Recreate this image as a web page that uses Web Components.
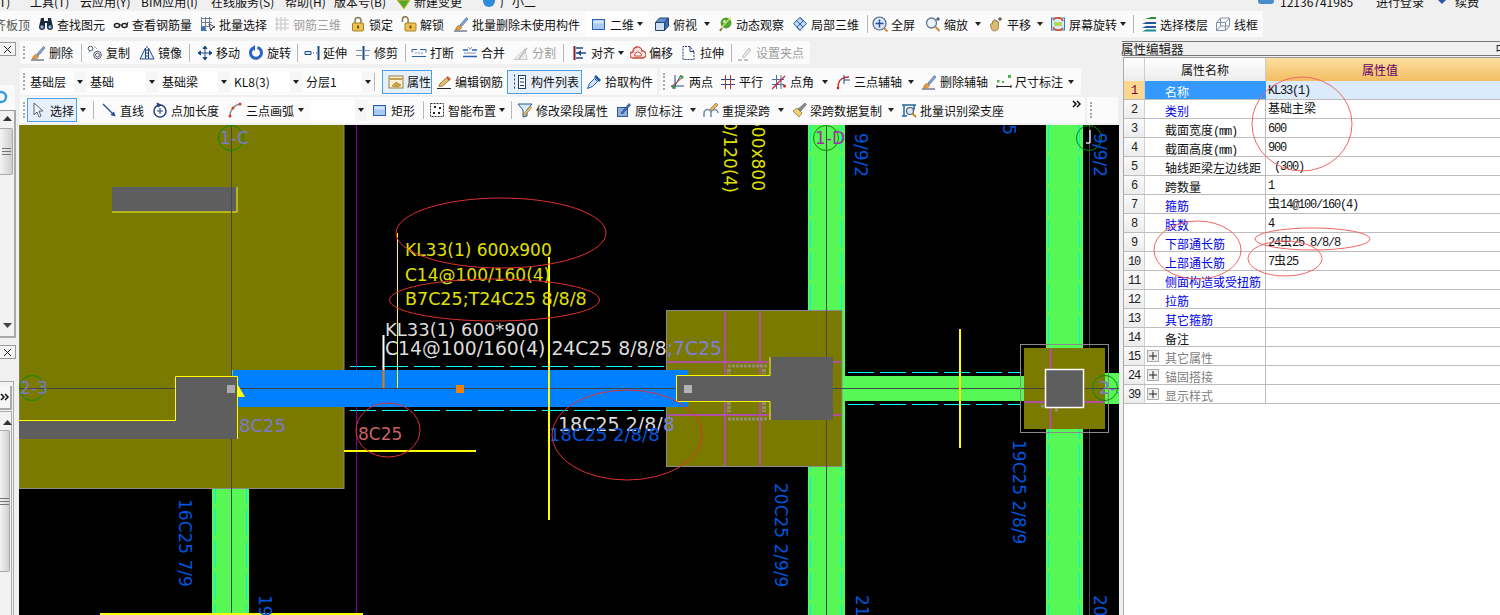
<!DOCTYPE html>
<html lang="zh">
<head>
<meta charset="utf-8">
<title>属性编辑器</title>
<style>
  html, body { margin: 0; height: 100%; overflow: hidden; background: #f0f0f0; }
  body { font: 12px "Noto Sans CJK SC", "Liberation Sans", sans-serif; color: #111; }
  i.zh { font: 12px/12px "Noto Sans CJK SC", sans-serif; letter-spacing: 0; }
  i.mono { font: 12px/12px "Liberation Mono", monospace; letter-spacing: -1.2px; }
</style>
</head>
<body>
<cad-app>
  <menu-strip slot="menu"></menu-strip>

  <tool-bar slot="top" fill>
    <tool-btn w="44" pull="-6" dim>齐板顶</tool-btn>
    <tool-btn w="75" icon="binoc">查找图元</tool-btn>
    <tool-btn w="87" icon="glasses">查看钢筋量</tool-btn>
    <tool-btn w="74" icon="batch">批量选择</tool-btn>
    <tool-btn w="76" icon="grid" off>钢筋三维</tool-btn>
    <tool-btn w="51" icon="lock">锁定</tool-btn>
    <tool-btn w="52" icon="unlock">解锁</tool-btn>
    <tool-btn w="133" icon="brush">批量删除未使用构件</tool-btn>
    <tool-btn w="63" icon="rect" arrow white pad="5">二维</tool-btn>
    <tool-gap w="5"></tool-gap>
    <tool-btn w="63" icon="cube" arrow>俯视</tool-btn>
    <tool-btn w="75" icon="orbit">动态观察</tool-btn>
    <tool-btn w="75" icon="local">局部三维</tool-btn>
    <tool-sep w="5"></tool-sep>
    <tool-btn w="53" icon="full">全屏</tool-btn>
    <tool-btn w="63" icon="zoom" arrow>缩放</tool-btn>
    <tool-btn w="62" icon="pan" arrow>平移</tool-btn>
    <tool-btn w="83" icon="screen" arrow>屏幕旋转</tool-btn>
    <tool-sep w="8"></tool-sep>
    <tool-btn w="74" icon="floors">选择楼层</tool-btn>
    <tool-btn w="48" icon="wire">线框</tool-btn>
  </tool-bar>

  <side-dock slot="left"></side-dock>

  <tool-bar slot="center" h="23" grip>
    <tool-btn w="51" icon="brush">删除</tool-btn>
    <tool-sep w="6"></tool-sep>
    <tool-btn w="52" icon="copy">复制</tool-btn>
    <tool-btn w="50" icon="mirror">镜像</tool-btn>
    <tool-sep w="8"></tool-sep>
    <tool-btn w="51" icon="move">移动</tool-btn>
    <tool-btn w="49" icon="spin">旋转</tool-btn>
    <tool-sep w="7"></tool-sep>
    <tool-btn w="51" icon="extend">延伸</tool-btn>
    <tool-btn w="50" icon="trim">修剪</tool-btn>
    <tool-sep w="6"></tool-sep>
    <tool-btn w="51" icon="cut">打断</tool-btn>
    <tool-btn w="51" icon="join">合并</tool-btn>
    <tool-btn w="50" icon="split" off>分割</tool-btn>
    <tool-sep w="9"></tool-sep>
    <tool-btn w="58" icon="align" arrow>对齐</tool-btn>
    <tool-btn w="51" icon="offset">偏移</tool-btn>
    <tool-btn w="50" icon="stretch">拉伸</tool-btn>
    <tool-sep w="6"></tool-sep>
    <tool-btn w="73" icon="clip" off>设置夹点</tool-btn>
  </tool-bar>

  <tool-row slot="center" style="margin-top:4px">
    <tool-bar h="27" grip>
      <tool-combo w="58" style="margin-left:-2px">基础层</tool-combo>
      <tool-gap w="2"></tool-gap>
      <tool-combo w="70">基础</tool-combo>
      <tool-gap w="2"></tool-gap>
      <tool-combo w="70">基础梁</tool-combo>
      <tool-gap w="2"></tool-gap>
      <tool-combo w="70">KL8(3)</tool-combo>
      <tool-gap w="2"></tool-gap>
      <tool-combo w="70">分层1</tool-combo>
      <tool-sep w="8"></tool-sep>
      <tool-btn w="50" icon="attr" on pad="5">属性</tool-btn>
      <tool-gap w="4"></tool-gap>
      <tool-btn w="71" icon="edit">编辑钢筋</tool-btn>
      <tool-btn w="75" icon="list" on pad="4">构件列表</tool-btn>
      <tool-gap w="4"></tool-gap>
      <tool-btn w="71" icon="pick">拾取构件</tool-btn>
    </tool-bar>
    <tool-bar h="27" grip style="margin-left:-1px">
      <tool-btn w="50" icon="two">两点</tool-btn>
      <tool-btn w="51" icon="para">平行</tool-btn>
      <tool-btn w="64" icon="angle" arrow>点角</tool-btn>
      <tool-btn w="86" icon="arcaxis" arrow>三点辅轴</tool-btn>
      <tool-btn w="75" icon="brush">删除辅轴</tool-btn>
      <tool-btn w="85" icon="dim" arrow>尺寸标注</tool-btn>
    </tool-bar>
  </tool-row>

  <tool-row slot="center" style="margin-top:2px">
    <tool-bar h="26" grip w="1065">
      <tool-btn w="50" icon="cursor" on pad="3" style="margin-left:-3px">选择</tool-btn>
      <tool-btn w="16" arrow></tool-btn>
      <tool-sep w="8"></tool-sep>
      <tool-btn w="51" icon="line">直线</tool-btn>
      <tool-btn w="75" icon="ptlen">点加长度</tool-btn>
      <tool-btn w="84" icon="arc" arrow>三点画弧</tool-btn>
      <tool-combo w="56"></tool-combo>
      <tool-gap w="5"></tool-gap>
      <tool-btn w="51" icon="rect">矩形</tool-btn>
      <tool-sep w="6"></tool-sep>
      <tool-btn w="82" icon="smart" arrow>智能布置</tool-btn>
      <tool-sep w="6"></tool-sep>
      <tool-btn w="99" icon="funnel">修改梁段属性</tool-btn>
      <tool-btn w="87" icon="inplace" arrow>原位标注</tool-btn>
      <tool-btn w="88" icon="respan" arrow>重提梁跨</tool-btn>
      <tool-btn w="110" icon="sweep" arrow>梁跨数据复制</tool-btn>
      <tool-btn w="110" icon="scan">批量识别梁支座</tool-btn>
      <tool-more></tool-more>
    </tool-bar>
    <tool-bar h="26" grip w="31" style="margin-left:-2px"></tool-bar>
  </tool-row>

  <cad-canvas slot="center"></cad-canvas>

  <prop-panel slot="right">
    <prop-row n="1" selected>名称<span slot="value">KL33(1)</span></prop-row>
    <prop-row n="2" link>类别<span slot="value"><i class="zh">基础主梁</i></span></prop-row>
    <prop-row n="3">截面宽度<i class="mono">(mm)</i><span slot="value">600</span></prop-row>
    <prop-row n="4">截面高度<i class="mono">(mm)</i><span slot="value">900</span></prop-row>
    <prop-row n="5">轴线距梁左边线距<span slot="value">&nbsp;(300)</span></prop-row>
    <prop-row n="6">跨数量<span slot="value">1</span></prop-row>
    <prop-row n="7" link>箍筋<span slot="value"><i class="zh">虫</i>14@100/160(4)</span></prop-row>
    <prop-row n="8" link>肢数<span slot="value">4</span></prop-row>
    <prop-row n="9" link>下部通长筋<span slot="value">24<i class="zh">虫</i>25 8/8/8</span></prop-row>
    <prop-row n="10" link>上部通长筋<span slot="value">7<i class="zh">虫</i>25</span></prop-row>
    <prop-row n="11" link>侧面构造或受扭筋</prop-row>
    <prop-row n="12" link>拉筋</prop-row>
    <prop-row n="13" link>其它箍筋</prop-row>
    <prop-row n="14">备注</prop-row>
    <prop-row n="15" group>其它属性</prop-row>
    <prop-row n="24" group>锚固搭接</prop-row>
    <prop-row n="39" group>显示样式</prop-row>
  </prop-panel>
</cad-app>

<script>
const ICONS = {
  binoc: `<path d="M3 2h3v3h4V2h3l2 9a3 3 0 0 1-6 0V7H7v4a3 3 0 0 1-6 0z" fill="#1d2a3a"/><circle cx="4" cy="11" r="1.7" fill="#8fb4dc"/><circle cx="12" cy="11" r="1.7" fill="#8fb4dc"/>`,
  glasses: `<ellipse cx="4" cy="9.5" rx="2.6" ry="2" fill="none" stroke="#222" stroke-width="1.5"/><ellipse cx="11.5" cy="9.5" rx="2.6" ry="2" fill="none" stroke="#222" stroke-width="1.5"/><path d="M6.5 9l2.500 0M14 9l1-3" stroke="#222"/>`,
  batch: `<path d="M1.500 1v13M5.500 1v13M9.500 1v8M1 2.500h11M1 6.500h11M1 10.500h8M1 14.500h6" stroke="#6c7f99" fill="none"/><rect x="1" y="11" width="4" height="4" fill="#3b6fd0"/><path d="M9 8l6 3-3 1-1 3z" fill="#fff" stroke="#345"/>`,
  grid: `<path d="M1 4h14M1 8h14M1 12h14M3 1v14M7 1v14M11 1v14" stroke="#c4c4c4" fill="none"/>`,
  lock: `<path d="M5 7V4.500a3 3 0 0 1 6 0V7" fill="none" stroke="#8a7a50" stroke-width="1.500"/><rect x="2.500" y="7" width="11" height="8" rx="1" fill="#efc14e" stroke="#a5802a"/><rect x="7" y="9.500" width="2" height="3" fill="#6b5216"/>`,
  unlock: `<path d="M1.500 6V3.500a2.800 2.800 0 0 1 5.600 0V7" fill="none" stroke="#8a7a50" stroke-width="1.500"/><rect x="4" y="7" width="11" height="8" rx="1" fill="#efc14e" stroke="#a5802a"/><rect x="8.500" y="9.500" width="2" height="3" fill="#6b5216"/>`,
  brush: `<path d="M1 15h13" stroke="#2f3f58"/><path d="M2.500 14c.5-3 2-4.500 4-4.500l2 2c0 1.500-3 3-6 2.500z" fill="#e79a3c" stroke="#9c6322" stroke-width=".6"/><path d="M7 9l6.500-7.500 1.500 1.500-6.500 7.500z" fill="#86a8e0" stroke="#46618f" stroke-width=".7"/>`,
  rect: `<rect x="1.500" y="3.500" width="12" height="10" fill="#a9c8f2" stroke="#2c5fb8"/><rect x="2.500" y="4.500" width="10" height="3" fill="#d4e4f8"/>`,
  cube: `<path d="M1.500 6.500h9v8h-9z" fill="#cfe0f4" stroke="#1f4472"/><path d="M1.500 6.500l4-4.500h9l-4 4.500z" fill="#5f93cc" stroke="#1f4472"/><path d="M10.500 6.500l4-4.500v8l-4 4.500z" fill="#3c70ac" stroke="#1f4472"/>`,
  orbit: `<path d="M3 15l2-3" stroke="#8a7a30" stroke-width="2"/><circle cx="9" cy="7" r="5" fill="#4eab2c" stroke="#2a701a" stroke-width=".6"/><circle cx="7.500" cy="5.500" r="1.500" fill="#c8eeb0"/><path d="M14 1.500C11 4 7 9 4 12" stroke="#e8d880" stroke-width="1.300" fill="none"/>`,
  local: `<path d="M8 1.500l6.500 6-6.500 7-6.500-7z" fill="#bcd6f4" stroke="#2a5f9e"/><path d="M4.500 4.500l6.500 6.500M8 1.500l3 3M11.500 4.500L5 11M8 14.500l-3-3" stroke="#2a5f9e" fill="none"/>`,
  full: `<circle cx="7.500" cy="7.500" r="6.500" fill="#dbe6f5" stroke="#4f6787" stroke-width="1.200"/><path d="M7.500 3.500v8M3.500 7.500h8" stroke="#234e9e" stroke-width="1.400"/><path d="M12.500 12.500l3 3" stroke="#d0902c" stroke-width="2"/>`,
  zoom: `<circle cx="6.500" cy="7" r="5" fill="#eef3fa" stroke="#64748c" stroke-width="1.300"/><path d="M10.500 11l4 4" stroke="#c98e2a" stroke-width="2"/><path d="M13 1v4M11 3h4" stroke="#1f3e70"/>`,
  pan: `<path d="M2.500 9c0-2 1.500-1.500 2-1V5.500c0-1 1.500-1 1.500 0V4.500c0-1 1.500-1 1.500 0v.5c0-1 1.500-1 1.500 0v1c0-1 1.500-1 1.500 0v5c0 2-1.500 4-4 4-3 0-3.500-3-4-6z" fill="#dcbc72" stroke="#80672e" stroke-width=".7"/><path d="M12 1v4M10 3h4" stroke="#333"/>`,
  screen: `<rect x="1.500" y="2" width="13" height="12" fill="#d4ecf8" stroke="#2a83b8"/><rect x="4" y="6" width="8" height="4" fill="#b9d65c"/><path d="M13 5a6 6 0 0 0-10-1M3 11a6 6 0 0 0 10 1" fill="none" stroke="#e04428" stroke-width="1.500"/>`,
  floors: `<path d="M1 4l9-3h5v2H5z" fill="#2c8c3c"/><path d="M1 8l4-2h10v2z" fill="#26569e"/><path d="M1 12l4-2h10v2z" fill="#26569e"/><path d="M1 15.500l4-2h10v2z" fill="#1c8a8c"/>`,
  wire: `<path d="M1.500 6.500h9v8h-9zM1.500 6.500l4-4.500h9l-4 4.500M10.500 14.500l4-4.500V2M5.500 2v8h9M5.500 10l-4 4.500" fill="none" stroke="#7f93ae"/>`,
  copy: `<circle cx="3.500" cy="3.500" r="2.300" fill="#fff" stroke="#4e5c6e"/><path d="M1 7.500l5-2.500M7 1l3 3" stroke="#9aa8ba"/><circle cx="10.500" cy="10" r="3.800" fill="none" stroke="#4e5c6e"/><circle cx="10.500" cy="10" r="2" fill="none" stroke="#4e5c6e"/>`,
  mirror: `<path d="M8 1v14" stroke="#1f3e70" stroke-dasharray="2 1"/><path d="M6.500 3v11H1zM9.500 3v11H15z" fill="#e4edf8" stroke="#1f4c88"/>`,
  move: `<path d="M8 1v14M1 8h14M8 1L6 3.500h4zM8 15l-2-2.500h4zM1 8l2.500-2v4zM15 8l-2.500-2v4z" stroke="#1f4c88" fill="#1f4c88"/>`,
  spin: `<path d="M9.500 2.500a5.500 5.500 0 1 1-5 1" fill="none" stroke="#2a62c8" stroke-width="3"/><path d="M7 0v6L3 3z" fill="#2a62c8"/>`,
  extend: `<path d="M1 6.500h6v3H1zM9 8h1M12 8h1" fill="#dce6f4" stroke="#1f4c88"/><path d="M14.500 1v14" stroke="#1f4c88" stroke-width="2"/>`,
  trim: `<path d="M1 5.500h6M1 10.500h6M10 5.500h5M10 10.500h4" stroke="#7f93ae"/><path d="M8.500 1v14" stroke="#1f4c88" stroke-width="2"/>`,
  cut: `<path d="M1 4.500h5M9 4.500h6M1 11.500h14M1 4.500v3M15 4.500v3" stroke="#2a62b8" fill="none"/><path d="M4 8h8" stroke="#7f93ae" stroke-dasharray="2 1"/>`,
  join: `<path d="M1 11.500h14M1 5h5M10 5h5" stroke="#2a62b8" stroke-width="1.400" fill="none"/><path d="M6 2l2 2.500L10 2M2 8h12" stroke="#7f93ae" fill="none"/>`,
  split: `<path d="M1 14.500h13L12 4z" fill="#eee" stroke="#c6c6c6"/><path d="M6 14l8-11" stroke="#bbb" stroke-width="1.500"/>`,
  align: `<path d="M2.500 1v14" stroke="#8a1c28" stroke-width="2"/><path d="M4 3h7M4 8h10M4 13h7" stroke="#1f4c88" stroke-width="1.500"/><path d="M9 5L5 8l4 3z" fill="#1f4c88"/>`,
  offset: `<path d="M3 13a3 3 0 0 1 0-6 4.500 4.500 0 0 1 9-1 3.500 3.500 0 0 1 1 7z" fill="#f8e0dc" stroke="#c84438" stroke-width="1.300"/><path d="M5 11a1.500 1.500 0 0 1 0-2 3 3 0 0 1 5-1 2 2 0 0 1 1 3z" fill="#fff" stroke="#c84438"/>`,
  stretch: `<path d="M2 14.500V1.500h7l4 5v8z" fill="#fff" stroke="#1f3e70" stroke-dasharray="2 1"/><path d="M9 1.500v5h4" stroke="#1f3e70" fill="none"/>`,
  clip: `<path d="M1 15h4M7 15h4" stroke="#c0c0c0" stroke-width="2"/><path d="M5 12l7-9 2 2-7 8z" fill="#e8e8e8" stroke="#c0c0c0"/>`,
  attr: `<rect x="1" y="2" width="14" height="12" fill="#faf1d8" stroke="#9c8040"/><path d="M1 5h14" stroke="#c8a050" stroke-width="2"/><path d="M4 12l4-4 5 3-3 2z" fill="#d8a238" stroke="#85601c" stroke-width=".5"/>`,
  edit: `<path d="M1 14.500h14" stroke="#222"/><path d="M3 12.500l1-3 8-7 2.500 2.500-8 7z" fill="#e6c070" stroke="#85601c" stroke-width=".8"/><path d="M11 3.500l2.500 2.500" stroke="#d04030" stroke-width="1.500"/>`,
  list: `<path d="M2 1.500h2M2 5.500h2M2 9.500h2M2 13.500h2" stroke="#1f3e70" stroke-width="2" stroke-dasharray="1 1"/><rect x="6.500" y="1.500" width="7" height="13" fill="#fff" stroke="#1f3e70"/><path d="M8 4.500h4M8 8h4M8 11.500h4" stroke="#1f3e70"/>`,
  pick: `<path d="M1.500 14.500l2-5 5-5 3 3-5 5z" fill="#cfe6fa" stroke="#1f5ca8"/><path d="M8 3l2-2 5 5-2 2z" fill="#1f5ca8"/>`,
  two: `<path d="M1 12h13M11 1L3 15M5 1v14" stroke="#1f4c88" fill="none"/><path d="M1 13l12-10" stroke="#c02828"/><circle cx="3.500" cy="13" r="1.600" fill="#3c9a3c"/><circle cx="12" cy="3" r="1.600" fill="#3c9a3c"/>`,
  para: `<path d="M1 5.500h14M1 10.500h14" stroke="#1f4c88"/><path d="M5.500 1v14M10.500 1v14" stroke="#c02828"/>`,
  angle: `<path d="M1 5.500h12M1 10.500h12M5.500 1v14M10 1v14" stroke="#1f4c88" opacity=".8"/><path d="M1 15L14 2" stroke="#d02020" stroke-width="1.300"/><circle cx="13.500" cy="12" r="1.500" fill="#d02020"/>`,
  arcaxis: `<path d="M3 14C3 7 6 3 14 3" fill="none" stroke="#d02020" stroke-width="1.300"/><path d="M9 1v9M9 6h6" stroke="#1f4c88"/><circle cx="3" cy="14" r="1.300" fill="#d02020"/>`,
  dim: `<path d="M1 14v-3M15 14v-3M1 12.500h14" stroke="#222"/><rect x="1" y="6" width="2.500" height="2.500" fill="#4cb84c"/><rect x="12" y="1" width="3" height="3" fill="#4cb84c"/><rect x="6" y="7" width="2" height="2" fill="#4cb84c"/>`,
  cursor: `<path d="M3 1v12l3-3 2 5 2-1-2-5h4z" fill="#f4f6fa" stroke="#55657c"/>`,
  line: `<path d="M2 2l11 11" stroke="#1f4c88" stroke-width="1.300"/><path d="M14.500 14.500l-5-1.500 3.500-3.500z" fill="#1f4c88"/>`,
  ptlen: `<circle cx="8" cy="9" r="6" fill="none" stroke="#26417a" stroke-width="1.500"/><path d="M5 1l4 2-3 2zM8 6v6M5 9h6" fill="#26417a" stroke="#26417a"/>`,
  arc: `<path d="M3 14C3 8 7 3 13 2" fill="none" stroke="#7a8ea8" stroke-width="1.500"/><circle cx="3" cy="14" r="1.500" fill="#d84020"/><circle cx="6" cy="6" r="1.500" fill="#d84020"/><circle cx="13" cy="2" r="1.500" fill="#d84020"/>`,
  smart: `<rect x="1.500" y="1.500" width="13" height="13" fill="#fff" stroke="#333" stroke-dasharray="2 1"/><path d="M5 4h2v2H5zM10 5h2v2h-2zM4 10h2v2H4zM9 10h2v2H9z" fill="#222"/>`,
  funnel: `<path d="M1 2h14l-5 6v6l-4 1V8z" fill="#dcebf8" stroke="#1f5c90"/><path d="M6 13l7-9 1.500 1.500-7 9z" fill="#e6c070" stroke="#85601c" stroke-width=".6"/>`,
  inplace: `<rect x="1.500" y="5.500" width="10" height="9" fill="#8eb0dc" stroke="#34588c"/><path d="M5 11l8-9.500 1.500 1.500-8 9z" fill="#3c6cb8" stroke="#1f3e70" stroke-width=".6"/>`,
  respan: `<path d="M1 15v-4a3.500 3.500 0 0 1 7 0v4M8 15v-4a3.500 3.500 0 0 1 7 0" fill="none" stroke="#7290b8" stroke-width="1.600"/><path d="M7 7l6-6 2 2-6 6z" fill="#e6b070" stroke="#85601c" stroke-width=".6"/>`,
  sweep: `<path d="M2 9l6 6 3-4-5-5z" fill="#f0d070" stroke="#8a6a24" stroke-width=".7"/><path d="M7 7l7-6 1.500 1.500-6 7z" fill="#8a8a8a" stroke="#555" stroke-width=".5"/>`,
  scan: `<path d="M1 3h14M3 3v11M13 3v5M1 14h5" stroke="#1f6a9c" stroke-width="1.500" fill="none"/><circle cx="9" cy="9" r="3.500" fill="#d8e6f0" stroke="#4a5a6a" stroke-width="1.200"/><path d="M11.500 11.500l3.500 3.500" stroke="#c08a28" stroke-width="2"/>`,
};

class CadApp extends HTMLElement {
  constructor() {
    super();
    this.attachShadow({ mode: "open" });
    this.shadowRoot.innerHTML = `
      <style>
        :host { display: grid; width: 1500px; height: 615px; overflow: hidden;
          grid-template-columns: 19px 1100px 381px; grid-template-rows: 11px 26px 1fr; }
        .menu { grid-column: 1 / -1; }
        .top { grid-column: 1 / -1; }
        .left { padding-top: 4px; min-height: 0; }
        .center { padding-top: 4px; display: flex; flex-direction: column; min-height: 0; }
        .right { padding-top: 4px; min-height: 0; }
      </style>
      <div class="menu"><slot name="menu"></slot></div>
      <div class="top"><slot name="top"></slot></div>
      <div class="left"><slot name="left"></slot></div>
      <div class="center"><slot name="center"></slot></div>
      <div class="right"><slot name="right"></slot></div>`;
  }
}

class MenuStrip extends HTMLElement {
  constructor() {
    super();
    this.attachShadow({ mode: "open" });
    const items = [[59, "视图(T)"], [50, "工具(T)"], [61, "云应用(Y)"], [70, "BIM应用(I)"],
      [74, "在线服务(S)"], [49, "帮助(H)"], [80, "版本号(B)"], [86, "新建变更"],
      [780, "广小二"], [96, "12136741985"], [79, "进行登录"], [45, "续费"]];
    this.shadowRoot.innerHTML = `
      <style>
        :host { display: flex; height: 10px; overflow: hidden; align-items: flex-end;
          font: 12px/16px "Noto Sans CJK SC", sans-serif; color: #111; margin-left: -29px; }
        span { flex: none; white-space: nowrap; }
        svg { position: absolute; top: 0; }
      </style>
      ${items.map(([w, t]) => `<span style="width:${w}px">${t}</span>`).join("")}
      <svg style="left:396px" width="16" height="10"><path d="M1 0h13L8 9z" fill="#4caa2c" stroke="#e8b030"/></svg>
      <svg style="left:482px" width="14" height="8"><ellipse cx="7" cy="1" rx="6" ry="6" fill="#2f8ad8"/></svg>
      <svg style="left:1258px" width="16" height="4"><rect x="0" y="-8" width="16" height="12" rx="3" fill="#4a8cc8"/></svg>
      <svg style="left:1437px" width="10" height="4"><path d="M1 0h8L5 4z" fill="#2a58a8"/></svg>`;
  }
}

class ToolBar extends HTMLElement {
  constructor() {
    super();
    this.attachShadow({ mode: "open" });
    this.shadowRoot.innerHTML = `
      <style>
        :host { display: flex; align-items: center; flex: none; box-sizing: border-box; width: fit-content;
          background: #fbfbfb; border-radius: 2px; height: 26px; margin-left: 1px; }
        .grip { flex: none; width: 3px; height: 60%; margin: 0 4px 0 3px; box-sizing: border-box;
          border-left: 2px dotted #a8a8a8; }
        :host(:not([grip])) .grip { display: none; }
        :host([fill]) { margin-left: 0; }
        ::slotted(tool-more) { margin-left: auto; }
      </style>
      <div class="grip"></div><slot></slot>`;
  }
  connectedCallback() {
    if (this.hasAttribute("h")) this.style.height = this.getAttribute("h") + "px";
    if (this.hasAttribute("w")) this.style.width = this.getAttribute("w") + "px";
  }
}

class ToolRow extends HTMLElement {
  constructor() {
    super();
    this.attachShadow({ mode: "open" });
    this.shadowRoot.innerHTML = `<style>:host { display: flex; gap: 4px; flex: none; }</style><slot></slot>`;
  }
}

class ToolBtn extends HTMLElement {
  constructor() {
    super();
    this.attachShadow({ mode: "open" });
  }
  connectedCallback() {
    const icon = ICONS[this.getAttribute("icon")];
    this.style.width = this.getAttribute("w") + "px";
    if (this.hasAttribute("pull")) this.style.marginLeft = this.getAttribute("pull") + "px";
    if (this.hasAttribute("pad")) this.style.paddingLeft = this.getAttribute("pad") + "px";
    this.shadowRoot.innerHTML = `
      <style>
        :host { display: flex; align-items: center; gap: 3px; flex: none; box-sizing: border-box;
          height: 100%; white-space: nowrap; color: #111; }
        :host([on]) { height: 24px; border: 1.5px solid #4e9ee6; background: #e6f0fb; }
        :host([white]) { background: #fff; height: 26px; }
        :host([off]) { color: #a0a0a0; }
        :host([dim]) { color: #555; justify-content: flex-end; padding-right: 8px; }
        svg { flex: none; }
        .caret { margin-left: auto; margin-right: 7px; width: 0; height: 0; flex: none;
          border: 3.500px solid transparent; border-top: 4px solid #222; border-bottom: 0; }
      </style>
      ${icon ? `<svg width="16" height="16" viewBox="0 0 16 16">${icon}</svg>` : ""}
      <slot></slot>
      ${this.hasAttribute("arrow") ? `<span class="caret"></span>` : ""}`;
  }
}

class ToolSep extends HTMLElement {
  constructor() {
    super();
    this.attachShadow({ mode: "open" });
    this.shadowRoot.innerHTML = `<style>
      :host { display: block; flex: none; height: 18px; }
      div { width: 1px; height: 100%; background: #b8b8b8; }
    </style><div></div>`;
  }
  connectedCallback() { this.style.width = this.getAttribute("w") + "px"; }
}

class ToolGap extends HTMLElement {
  constructor() {
    super();
    this.attachShadow({ mode: "open" });
    this.shadowRoot.innerHTML = `<style>:host { display: block; flex: none; }</style>`;
  }
  connectedCallback() { this.style.width = this.getAttribute("w") + "px"; }
}

class ToolCombo extends HTMLElement {
  constructor() {
    super();
    this.attachShadow({ mode: "open" });
    this.shadowRoot.innerHTML = `
      <style>
        :host { display: flex; align-items: center; flex: none; height: 21px; background: #fff; padding-left: 2px; box-sizing: border-box; }
        .t { flex: 1; white-space: nowrap; overflow: hidden; }
        .a { flex: none; width: 12px; height: 100%; background: #f6f6f6; display: flex; align-items: center; justify-content: center; }
        .a i { width: 0; height: 0; border: 3.500px solid transparent; border-top: 4px solid #222; border-bottom: 0; }
      </style>
      <div class="t"><slot></slot></div><div class="a"><i></i></div>`;
  }
  connectedCallback() { this.style.width = this.getAttribute("w") + "px"; }
}

class ToolMore extends HTMLElement {
  constructor() {
    super();
    this.attachShadow({ mode: "open" });
    this.shadowRoot.innerHTML = `
      <style>:host { display: block; flex: none; width: 12px; height: 100%; margin-right: 1px; }
      svg { display: block; margin-top: 3px; }</style>
      <svg width="10" height="8"><path d="M1 1l3 3-3 3M5 1l3 3-3 3" fill="none" stroke="#111" stroke-width="1.500"/></svg>`;
  }
}

class SideDock extends HTMLElement {
  constructor() {
    super();
    this.attachShadow({ mode: "open" });
    const x = `<svg width="9" height="9"><path d="M1 1l7 7M8 1L1 8" stroke="#222"/></svg>`;
    const up = `<svg class="arr" width="9" height="5"><path d="M4.500 0L9 5H0z" fill="#333"/></svg>`;
    const down = `<svg class="arr" width="9" height="5"><path d="M4.500 5L9 0H0z" fill="#444"/></svg>`;
    const lines = `<svg width="9" height="7"><path d="M0 .5h9M0 3.500h9M0 6.500h9" stroke="#777"/></svg>`;
    this.shadowRoot.innerHTML = `
      <style>
        :host { display: block; height: 574px; overflow: hidden; }
        .close { box-sizing: border-box; width: 16px; height: 14px; margin-top: 1px; border: 1px solid #999; border-left: 0;
          background: #f4f4f4; display: flex; align-items: center; justify-content: center; }
        .blank { width: 15px; height: 54px; display: flex; flex-direction: column; justify-content: flex-end; }
        .pick { height: 25px; background: #fafafa; overflow: hidden; }
        .pick svg { display: block; margin: 5px 0 0 -6px; }
        .pane { box-sizing: border-box; width: 16px; height: 228px; border-top: 1px solid #999; border-right: 2px solid #aaa;
          border-bottom: 2px solid #aaa; background: #f2f2f2; display: flex; flex-direction: column; align-items: flex-start; }
        .arr { display: block; margin-left: 3px; flex: none; }
        .thumb { box-sizing: border-box; width: 13px; border: 1px solid #aaa; border-left: 0; border-radius: 0 2px 2px 0;
          background: linear-gradient(90deg, #f4f4f4, #cfcfcf); display: flex; align-items: center; justify-content: center; flex: none; }
        .pane2 { box-sizing: border-box; width: 14px; height: 235px; margin-top: 22px; border-top: 1px solid #aaa;
          border-right: 1px solid #aaa; background: #f2f2f2; overflow: hidden; }
        .more { box-sizing: border-box; width: 12px; height: 24px; margin-top: 4px; border-right: 2px solid #aaa; border-bottom: 2px solid #aaa;
          background: #f6f6f6; display: flex; align-items: center; justify-content: center; }
        .track { border-top: 1px solid #aaa; margin-top: 1px; padding-top: 8px; width: 11px; border-right: 1px solid #aaa; height: 220px; }
      </style>
      <div class="close">${x}</div>
      <div class="blank"><div class="pick"><svg width="14" height="14"><circle cx="7" cy="7" r="5" fill="none" stroke="#3a9ae0" stroke-width="2.500"/></svg></div></div>
      <div class="pane">
        <div style="height:5px"></div>${up}
        <div class="thumb" style="height:47px;margin-top:7px">${lines}</div>
        <div style="flex:1"></div>${down}<div style="height:8px"></div>
      </div>
      <div class="close" style="margin-top:7px">${x}</div>
      <div class="pane2">
        <div class="more"><svg width="10" height="8"><path d="M1 1l3 3-3 3M5 1l3 3-3 3" fill="none" stroke="#111" stroke-width="1.500"/></svg></div>
        <div class="track">${up}
          <div class="thumb" style="width:10px;height:142px;margin-top:5px">${lines}</div>
        </div>
      </div>`;
  }
}

class CadCanvas extends HTMLElement {
  constructor() {
    super();
    this.attachShadow({ mode: "open" });
    const vtext = (x, y, t, fill = "#0055dd", end = false) =>
      `<text transform="translate(${x} ${y}) rotate(90)" fill="${fill}"${end ? ` text-anchor="end"` : ""}>${t}</text>`;
    const column = (x) => `<rect x="${x}" y="125" width="37" height="490" fill="#55f855"/>
      <path d="M${x + 2.5} 125V615M${x + 33.5} 125V615" stroke="#00f0f0" stroke-dasharray="26 6"/>`;
    this.shadowRoot.innerHTML = `
      <style>
        :host { display: block; flex: none; margin-top: 2px; width: 1100px; height: 490px; background: #000; overflow: hidden; }
        svg { display: block; }
        text { font: 17px "DejaVu Sans", sans-serif; }
      </style>
      <svg width="1100" height="490" viewBox="19 125 1100 490">
        ${column(808)}${column(1046)}
        <rect x="212" y="125" width="37" height="490" fill="#55f855"/>
        <path d="M215.500 125V615M246.500 125V615" stroke="#00f0f0" stroke-dasharray="26 6"/>
        <rect x="845" y="376" width="179" height="25" fill="#55f855"/>
        <rect x="1100" y="373" width="19" height="31" fill="#55f855"/>
        <path d="M848 372.500H1020M848 404.500H1020M350 366.500H666M350 410.500H666" stroke="#00ffff" stroke-dasharray="26 6"/>

        <rect x="19" y="124" width="325" height="364.500" fill="#7b7a00" stroke="#8a8a8a"/>
        <path d="M356.500 125V615" stroke="#8000a8"/>
        <path d="M112 187H237V212H112z" fill="#5e5e5e"/>
        <path d="M112 212H237V187" fill="none" stroke="#ffff00"/>

        <rect x="232" y="370" width="456" height="37" fill="#0080ff"/>

        <rect x="666.500" y="310.500" width="175.500" height="156" fill="#7b7a00" stroke="#8a8a8a"/>
        <path d="M725 311V466M760 311V466M667 362H841M667 415H841" stroke="#b050a0" stroke-width="2"/>
        <path d="M232 370V376" stroke="#ffff00" />
        <rect x="666" y="370" width="22" height="37" fill="#0080ff"/>

        <path d="M231.500 125V615M826.500 125V615M1089.500 125V615" stroke="#484848"/>
        <path d="M19 388.500H1119" stroke="#444"/>

        <path d="M19 420H175V376H237V439H19z" fill="#5e5e5e"/>
        <path d="M19 420.500H175.500V376.500H237.500V439" fill="none" stroke="#ffff00"/>
        <rect x="227" y="385" width="8" height="8" fill="#ababab"/>
        <path d="M238 385l7 12h-7z" fill="#ffff00"/>
        <path d="M770 357H833V420H770V401H676V375H770z" fill="#5e5e5e"/>
        <path d="M770 357V375.500H676.500V401.500H770V420" fill="none" stroke="#ffff00"/>
        <path d="M684 385h8v8h-8z" fill="#b4b4b4"/>
        <path d="M728 366H768M728 419H768" stroke="#8f8f70" stroke-width="3" stroke-dasharray="3 1"/>
        <path d="M729 369V374M729 402V412M764 369V374M764 402V412" stroke="#8f8f70" stroke-width="4" stroke-dasharray="3 1"/>
        <path d="M833 388.500H845" stroke="#444"/>

        <path d="M383.500 335V370" stroke="#fff" stroke-width="2"/>
        <path d="M383.500 370V388" stroke="#e87a00" stroke-width="2"/>
        <path d="M397.500 233V388" stroke="#ffff00"/>
        <rect x="456" y="385" width="8" height="8" fill="#f08000"/>
        <path d="M549 257V520M344 451H476M960 329V448M100 614H363" stroke="#ffff00" stroke-width="2"/>

        <rect x="1020.500" y="344.500" width="88" height="88" fill="none" stroke="#8a8a8a"/>
        <rect x="1024" y="348" width="81" height="81" fill="#7b7a00"/>
        <path d="M1050.500 348V429M1024 402H1105" stroke="#b050a0" stroke-width="2"/>
        <path d="M1024 388.500H1105" stroke="#444"/>
        <path d="M1041 406H1055M1055 410H1058" stroke="#8f8f70" stroke-width="3" stroke-dasharray="3 1"/>
        <rect x="1045.500" y="369.500" width="38" height="38" fill="#5e5e5e" stroke="#fff" stroke-width="1.500"/>

        <circle cx="231" cy="138" r="12.500" fill="none" stroke="#0a8a0a"/>
        <circle cx="826" cy="138" r="12.500" fill="none" stroke="#0a8a0a"/>
        <circle cx="1089" cy="138" r="12.500" fill="none" stroke="#0a8a0a"/>
        <circle cx="32" cy="388" r="12.500" fill="none" stroke="#0a8a0a"/>
        <circle cx="1105" cy="388" r="12.500" fill="none" stroke="#0a8a0a"/>
        <text x="220" y="144" fill="#7a7acc">1-C</text>
        <text x="815" y="144" fill="#a030a0">1-D</text>
        <text x="20" y="394" fill="#7a7acc">2-3</text>
        <text x="1099" y="394" fill="#7a7acc">2-3</text>
        <path d="M1090 130V143M1090 143H1086" stroke="#ddd" stroke-width="1.500"/>

        <text x="239" y="432" fill="#7a7acc" style="font-size:18px">8C25</text>
        <text x="358" y="440" fill="#c86464">8C25</text>

        <text x="405" y="256" fill="#e0e000">KL33(1) 600x900</text>
        <text x="405" y="281" fill="#e0e000">C14@100/160(4)</text>
        <text x="405" y="305" fill="#e0e000" style="font-size:17.5px">B7C25;T24C25 8/8/8</text>
        <text x="385" y="336" fill="#dcdcdc" style="font-size:18px">KL33(1) 600*900</text>
        <text x="385" y="355" fill="#dcdcdc" style="font-size:18.800px">C14@100/160(4) 24C25 8/8/8<tspan fill="#8080d8">;7C25</tspan></text>
        <text x="558" y="431" fill="#dcdcdc" style="font-size:19px">18C25 2/8/<tspan fill="#8080d8">8</tspan></text>
        <text x="549" y="441" fill="#0055dd" style="font-size:18px">18C25 2/8/8</text>

        ${vtext(752, 191, "600x800", "#e0e000", true)}
        ${vtext(724, 193, "C10@200/120(4)", "#e0e000", true)}
        ${vtext(855, 177, "9/9/2", "#0055dd", true)}
        ${vtext(1094, 177, "9/9/2", "#0055dd", true)}
        ${vtext(1003, 135, "5", "#0055dd", true)}
        ${vtext(179, 499, "16C25 7/9")}
        ${vtext(259, 595, "19C25 2/8/9")}
        ${vtext(775, 483, "20C25 2/9/9")}
        ${vtext(1013, 440, "19C25 2/8/9")}
        ${vtext(856, 595, "21C25 2/8/9")}
        ${vtext(1094, 595, "20C25 2/8/9")}

        <g fill="none" stroke="#e03030">
          <ellipse cx="501" cy="233" rx="105" ry="35"/>
          <ellipse cx="494.500" cy="300" rx="105" ry="21"/>
          <ellipse cx="388" cy="430" rx="32" ry="27"/>
          <ellipse cx="627" cy="435" rx="75" ry="45"/>
        </g>
      </svg>`;
  }
}

class PropPanel extends HTMLElement {
  constructor() {
    super();
    this.attachShadow({ mode: "open" });
    this.shadowRoot.innerHTML = `
      <style>
        :host { display: block; position: relative; height: 574px; padding-left: 3px; overflow: hidden; }
        .title { box-sizing: border-box; height: 15px; border-top: 1px solid #777; border-bottom: 1px solid #777;
          font: 12.500px/13px "Noto Sans CJK SC", sans-serif; color: #222; display: flex; justify-content: space-between; white-space: nowrap; }
        .body { box-sizing: border-box; height: 560px; margin-top: 1px; border-left: 1px solid #aaa; background: #fff; margin-left: 1px; }
        .head { display: grid; grid-template-columns: 21px 121px 1fr; height: 24px; line-height: 23px; text-align: center; border-top: 1px solid #999; box-sizing: border-box; }
        .head div { box-sizing: border-box; border-right: 1px solid #ccc; border-bottom: 1px solid #bbb;
          background: linear-gradient(#ffffff, #ececec); }
        .head .val { background: linear-gradient(#fbdf9f, #f3bc60); color: #660066; border: 0; padding-right: 6px; }
        svg { position: absolute; left: 0; top: 0; pointer-events: none; }
      </style>
      <div class="title"><span style="margin-left:-1px">属性编辑器</span><span style="margin-right:-8px">中</span></div>
      <div class="body">
        <div class="head"><div></div><div>属性名称</div><div class="val">属性值</div></div>
        <slot></slot>
      </div>
      <svg width="380" height="574" viewBox="1120 41 380 574" fill="none" stroke="#f26666">
        <ellipse cx="1303" cy="124" rx="50" ry="47"/>
        <ellipse cx="1198.500" cy="250" rx="43.500" ry="29"/>
        <ellipse cx="1313.500" cy="239" rx="57.500" ry="11"/>
        <ellipse cx="1286" cy="258.500" rx="37" ry="17.500"/>
      </svg>`;
  }
}

class PropRow extends HTMLElement {
  constructor() {
    super();
    this.attachShadow({ mode: "open" });
  }
  connectedCallback() {
    const group = this.hasAttribute("group");
    this.shadowRoot.innerHTML = `
      <style>
        :host { display: grid; grid-template-columns: 21px 121px 1fr; height: 19px; box-sizing: border-box;
          border-bottom: 1px solid #bdbdbd; color: #111; line-height: 21px; white-space: nowrap; }
        :host([link]) .name { color: #0000e6; }
        :host([group]) .name { color: #808080; }
        .n { box-sizing: border-box; border-right: 1px solid #cfcfcf; background: linear-gradient(#fafafa, #ececec);
          font: 12px/20px "Liberation Mono", monospace; letter-spacing: -1.2px; text-align: center; color: #222; overflow: hidden; }
        .name { box-sizing: border-box; border-right: 1px solid #bdbdbd; padding-left: 20px; overflow: hidden; position: relative; }
        .val { padding-left: 2px; font: 12px/21px "Liberation Mono", monospace; letter-spacing: -1.2px; color: #111; overflow: hidden; }
        .plus { position: absolute; left: 2px; top: 3px; box-sizing: border-box; width: 12px; height: 12px; border: 1px solid #aaa;
          background: #eee; display: flex; align-items: center; justify-content: center; }
        :host([selected]) .n { background: #fbd78f; color: #7a0030; }
        :host([selected]) .name { background: #3399ff; color: #fff; border-right: 0; }
        :host([selected]) .val { background: #dcebfb; }
      </style>
      <div class="n">${this.getAttribute("n")}</div>
      <div class="name">${group ? `<span class="plus"><svg width="8" height="8"><path d="M4 0v8M0 4h8" stroke="#222"/></svg></span>` : ""}<slot></slot></div>
      <div class="val"><slot name="value"></slot></div>`;
  }
}

customElements.define("cad-app", CadApp);
customElements.define("menu-strip", MenuStrip);
customElements.define("tool-bar", ToolBar);
customElements.define("tool-row", ToolRow);
customElements.define("tool-btn", ToolBtn);
customElements.define("tool-sep", ToolSep);
customElements.define("tool-gap", ToolGap);
customElements.define("tool-combo", ToolCombo);
customElements.define("tool-more", ToolMore);
customElements.define("side-dock", SideDock);
customElements.define("cad-canvas", CadCanvas);
customElements.define("prop-panel", PropPanel);
customElements.define("prop-row", PropRow);
</script>
</body>
</html>
